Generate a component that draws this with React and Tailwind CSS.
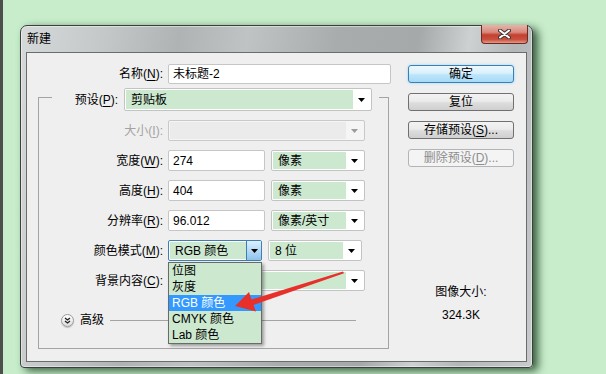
import React from 'react'

const FONT = "font-['Liberation_Sans','Noto_Sans_CJK_SC',sans-serif]"

function Key({ children }) {
  return <span className="underline underline-offset-[2px]">{children}</span>
}

function Label({ name, k, className = '' }) {
  return (
    <div className={`whitespace-nowrap text-right text-[12px] leading-[16px] ${className}`}>
      {name}(<Key>{k}</Key>):
    </div>
  )
}

function Tri({ color = '#000' }) {
  return (
    <svg width="7" height="4" viewBox="0 0 7 4">
      <path d="M0 0H7L3.5 4Z" fill={color} />
    </svg>
  )
}

function Drop({ text, className = '' }) {
  return (
    <div className={`flex shrink-0 rounded-[2px] border border-[#c3c3c3] bg-white p-[1px] ${className}`}>
      <div className="flex flex-1 items-center bg-[#cce8cf] pl-[5px] text-[12px] leading-none">{text}</div>
      <div className="flex w-[17px] items-center justify-center">
        <Tri />
      </div>
    </div>
  )
}

function Field({ value, className = '' }) {
  return (
    <div className={`flex shrink-0 items-center rounded-[2px] border border-[#c6c6c6] bg-white pl-[4px] text-[12px] leading-none ${className}`}>
      {value}
    </div>
  )
}

function Row({ label, k, disabled, children }) {
  return (
    <div className="flex h-[21px] items-center">
      <Label name={label} k={k} className={disabled ? 'w-[124px] text-[#a3a3a3]' : 'w-[124px]'} />
      <div className="ml-[5px] flex h-[21px] gap-[6px]">{children}</div>
    </div>
  )
}

function Btn({ children, kind }) {
  const look =
    kind === 'primary'
      ? 'border-[#3c7fb1] bg-[linear-gradient(#eef8fe_0%,#d9f0fc_45%,#bde5fb_55%,#a6daf6_100%)] shadow-[0_0_3px_#8fd6ff]'
      : kind === 'disabled'
        ? 'border-[#b1b5b8] bg-[#f4f4f4] text-[#8d8d8d]'
        : 'border-[#707070] bg-[linear-gradient(#f3f3f3_0%,#ebebeb_45%,#dddddd_55%,#cfcfcf_100%)]'
  return (
    <div className={`flex h-[18px] items-center justify-center rounded-[3px] border text-[12px] leading-none ${look}`}>
      {children}
    </div>
  )
}

const MODES = ['位图', '灰度', 'RGB 颜色', 'CMYK 颜色', 'Lab 颜色']

export default function App() {
  return (
    <div className={`relative flex h-[374px] w-[606px] overflow-hidden bg-[#c7edcb] text-black ${FONT}`}>
      <div className="h-full w-[3px] bg-[#4d4f4d]" />

      {/* window */}
      <div className="ml-[17px] mt-[25px] flex h-[343px] w-[513px] flex-col rounded-b-[4px] rounded-t-[7px] border border-[#3d3f3f] bg-[linear-gradient(100deg,#d6d9d9_0%,#c6c9c9_14%,#afb3b3_28%,#c0c3c3_40%,#a9acac_56%,#a6a9a9_70%,#ced1d1_79%,#b4b7b7_87%,#c8cbcb_100%)] shadow-[inset_0_0_0_1px_rgba(255,255,255,0.45),5px_3px_9px_rgba(10,45,15,0.75)]">
        <div className="flex h-[26px] items-start">
          <div className="pl-[6px] pt-[6px] text-[12px] leading-[14px]">新建</div>
          <div className="-mt-[1px] ml-auto mr-[4px] flex h-[19px] w-[47px] items-center justify-center rounded-b-[4px] border border-[#6b2a22] border-t-0 bg-[linear-gradient(#e6b3aa_0%,#d98a7c_40%,#c4402f_55%,#c94f3d_80%,#e39a88_100%)]">
            <svg width="13" height="10" viewBox="0 0 13 10">
              <path d="M2 1.5L11 8.5M11 1.5L2 8.5" stroke="#3a3a3a" strokeWidth="4" strokeLinecap="round" />
              <path d="M2 1.5L11 8.5M11 1.5L2 8.5" stroke="#fff" strokeWidth="2" strokeLinecap="round" />
            </svg>
          </div>
        </div>

        {/* client */}
        <div className="relative mx-[5px] mb-[5px] flex flex-1 bg-[#efefef] shadow-[inset_0_0_0_1px_#6c6c6c]">
          <div className="w-[382px] pt-[12px]">
            <div className="flex h-[20px] items-center">
              <Label name="名称" k="N" className="w-[137px]" />
              <Field value="未标题-2" className="ml-[5px] h-[20px] w-[223px]" />
            </div>

            <div className="ml-[12px] mt-[13px] w-[351px] border border-[#a4a4a4] pb-[22px]">
              <div className="-mt-[10px] ml-[13px] flex h-[23px] w-[327px] items-center bg-[#efefef]">
                <Label name="预设" k="P" className="w-[66px]" />
                <Drop text="剪贴板" className="ml-[6px] h-[23px] w-[248px]" />
              </div>

              <div className="mt-[9px] flex flex-col gap-[9px]">
                <Row label="大小" k="I" disabled>
                  <div className="flex w-[197px] rounded-[2px] border border-[#c9c9c9] bg-[#f5f5f5] p-[1px]">
                    <div className="flex-1 bg-[#ebebeb]" />
                    <div className="flex w-[17px] items-center justify-center">
                      <Tri color="#9b9b9b" />
                    </div>
                  </div>
                </Row>
                <Row label="宽度" k="W">
                  <Field value="274" className="w-[97px]" />
                  <Drop text="像素" className="w-[94px]" />
                </Row>
                <Row label="高度" k="H">
                  <Field value="404" className="w-[97px]" />
                  <Drop text="像素" className="w-[94px]" />
                </Row>
                <Row label="分辨率" k="R">
                  <Field value="96.012" className="w-[97px]" />
                  <Drop text="像素/英寸" className="w-[94px]" />
                </Row>
                <Row label="颜色模式" k="M">
                  <div className="flex w-[94px] rounded-[2px] border border-[#3c7fb1] bg-white p-[1px]">
                    <div className="flex flex-1 items-center bg-[#cce8cf] pl-[5px] text-[12px] leading-none">RGB 颜色</div>
                    <div className="-my-[1px] -mr-[1px] flex w-[15px] items-center justify-center border-l border-[#3c7fb1] bg-[linear-gradient(#dcefff_0%,#b7daf6_50%,#8ec3ec_100%)]">
                      <Tri />
                    </div>
                  </div>
                  <Drop text="8 位" className="w-[94px]" />
                </Row>
                <Row label="背景内容" k="C">
                  <Drop text="" className="w-[197px]" />
                </Row>
              </div>

              <div className="mt-[23px] flex h-[12px] items-center">
                <div className="ml-[22px] flex h-[13px] w-[13px] items-center justify-center rounded-full border border-[#9a9a9a] bg-[linear-gradient(#ffffff,#dcdcdc)] shadow-[0_1px_1px_rgba(0,0,0,0.2)]">
                  <svg width="7" height="7" viewBox="0 0 7 7">
                    <path d="M1 1L3.5 3L6 1M1 4L3.5 6L6 4" stroke="#222" strokeWidth="1.3" fill="none" />
                  </svg>
                </div>
                <div className="ml-[6px] text-[12px] leading-none">高级</div>
                <div className="ml-[6px] mr-[32px] h-px flex-1 bg-[#a4a4a4]" />
              </div>
            </div>
          </div>

          <div className="flex w-[106px] flex-col pt-[13px]">
            <div className="flex flex-col gap-[10px]">
              <Btn kind="primary">确定</Btn>
              <Btn>复位</Btn>
              <Btn>
                存储预设(<Key>S</Key>)...
              </Btn>
              <Btn kind="disabled">
                删除预设(<Key>D</Key>)...
              </Btn>
            </div>
            <div className="mt-[117px] text-center text-[12px] leading-[16px]">图像大小:</div>
            <div className="mt-[7px] text-center text-[12px] leading-[16px]">324.3K</div>
          </div>

          {/* open colour-mode list */}
          <div className="absolute left-[142px] top-[210px] w-[94px] border border-[#6a6a6a] bg-[#cce8cf] shadow-[2px_2px_3px_rgba(0,0,0,0.35)]">
            {MODES.map((m, i) => (
              <div
                key={m}
                className={`flex h-[16px] items-center pl-[3px] text-[12px] leading-none ${i === 2 ? 'bg-[#3399ff] text-white' : ''}`}
              >
                {m}
              </div>
            ))}
          </div>
        </div>
      </div>

      {/* red annotation arrow */}
      <svg className="pointer-events-none absolute left-0 top-0" width="606" height="374" viewBox="0 0 606 374">
        <polygon
          points="343,271.5 344,273.2 253.5,305 256,311.5 235,306 249,292 251.5,299.5"
          fill="#e8302b"
        />
      </svg>
    </div>
  )
}
